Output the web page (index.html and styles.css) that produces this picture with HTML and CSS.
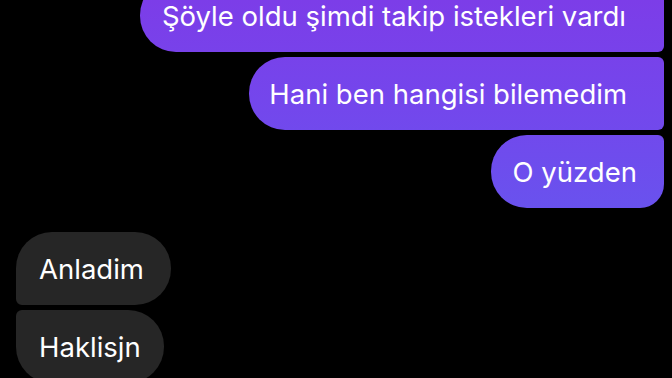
FILE: index.html
```html
<!DOCTYPE html>
<html lang="tr">
<head>
<meta charset="utf-8">
<link rel="stylesheet" href="styles.css">
</head>
<body>
<main class="chat">
  <div class="msg sent first wide">Şöyle oldu şimdi takip istekleri vardı</div>
  <div class="msg sent wide second">Hani ben hangisi bilemedim</div>
  <div class="msg sent last">O yüzden</div>
  <div class="msg recv first">Anladim</div>
  <div class="msg recv next">Haklisjn</div>
</main>
</body>
</html>
```

FILE: styles.css
```css
html, body {
  margin: 0;
  padding: 0;
  background: #000;
  overflow: hidden;
  height: 100%;
}

.chat {
  display: flex;
  flex-direction: column;
  margin-top: -21px;
  padding: 0 8px 0 16px;
}

.msg {
  height: 73px;
  display: flex;
  align-items: center;
  box-sizing: border-box;
  font-family: Inter, "Noto Sans", "Liberation Sans", sans-serif;
  font-size: 27.5px;
  color: #fff;
  white-space: nowrap;
}

.sent {
  align-self: flex-end;
  padding: 0 27px 0 22px;
  margin-bottom: 5px;
  border-radius: 36px 6px 6px 36px;
  background: linear-gradient(to bottom, #7c3de8 0px, #7446ec 100px, #6952ee 210px) fixed;
}

.sent.wide {
  padding-right: 38px;
}

.sent.second {
  padding-left: 20px;
  padding-right: 37px;
}

.sent.last {
  border-bottom-right-radius: 24px;
  margin-bottom: 24px;
}

.recv {
  align-self: flex-start;
  padding: 0 27px 0 23px;
  background: #262626;
  margin-bottom: 5px;
}

.recv.first {
  border-radius: 36px 36px 36px 6px;
}

.recv.next {
  padding-right: 23px;
  border-radius: 6px 36px 36px 36px;
}
```
